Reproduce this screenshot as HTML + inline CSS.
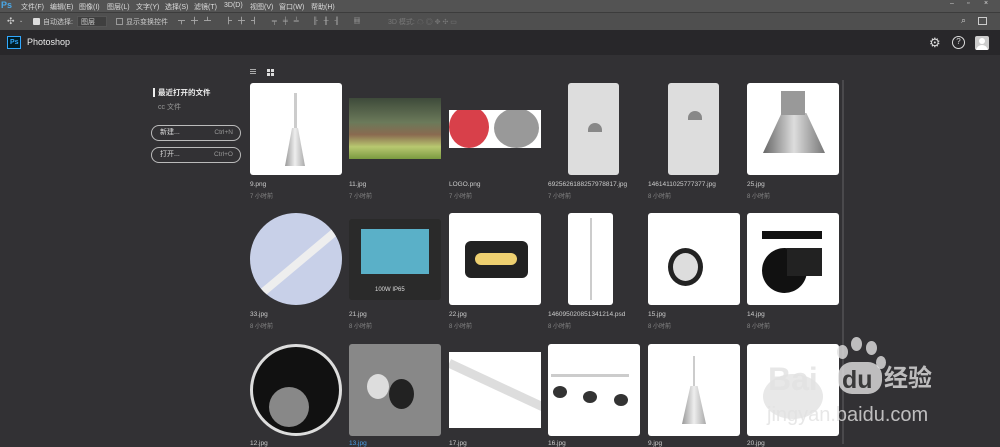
<!DOCTYPE html>
<html><head><meta charset="utf-8"><style>
*{margin:0;padding:0;box-sizing:border-box}
body{width:1000px;height:444px;overflow:hidden;background:#323134;font-family:"Liberation Sans","Noto Sans CJK SC",sans-serif;position:relative;color:#ddd}
.abs{position:absolute}
.menu{left:0;top:0;width:1000px;height:12px;background:#535353;font-size:7px;color:#ddd}
.menu span{position:absolute;top:2px}
.tb{left:0;top:12px;width:1000px;height:18px;background:#4f4f4f;border-top:1px solid #3c3c3c;font-size:7px;color:#ccc}
.hdr{left:0;top:30px;width:1000px;height:25px;background:#28272a}
.th{position:absolute;width:92px;height:92px;background:#fff;border-radius:3px;overflow:hidden}
.nm{position:absolute;font-size:6.5px;color:#ccc}
.tm{position:absolute;font-size:6px;color:#888}
.btn{position:absolute;left:151px;width:90px;height:16px;border:1.5px solid #bbb;border-radius:8px;font-size:7px;color:#ddd;padding-left:8px;line-height:13px}
.btn i{position:absolute;right:7px;top:0;font-style:normal;color:#999;font-size:6.5px}
.wm{color:rgba(225,225,225,.8)}
</style></head><body>
<div class="abs menu">
<span style="left:1px;top:0;font-size:9px;color:#4aa8e8;font-weight:bold">Ps</span>
<span style="left:21px">文件(F)</span><span style="left:50px">编辑(E)</span><span style="left:79px">图像(I)</span><span style="left:107px">图层(L)</span><span style="left:136px">文字(Y)</span><span style="left:165px">选择(S)</span><span style="left:194px">滤镜(T)</span><span style="left:224px">3D(D)</span><span style="left:250px">视图(V)</span><span style="left:279px">窗口(W)</span><span style="left:311px">帮助(H)</span>
<span style="left:950px;top:0;color:#ccc">–</span><span style="left:967px;top:0">▫</span><span style="left:984px;top:0">×</span>
</div>
<div class="abs tb">
<span class="abs" style="left:7px;top:3px;font-size:9px">✣</span><span class="abs" style="left:19px;top:5px;font-size:5px">⌄</span>
<span class="abs" style="left:33px;top:5px;width:7px;height:7px;background:#ddd;border-radius:1px"></span>
<span class="abs" style="left:43px;top:4px">自动选择:</span>
<span class="abs" style="left:77px;top:3px;width:30px;height:11px;background:#3f3f3f;border:1px solid #555;padding-left:3px">图层</span>
<span class="abs" style="left:116px;top:5px;width:7px;height:7px;border:1px solid #999"></span>
<span class="abs" style="left:126px;top:4px">显示变换控件</span>
<span class="abs" style="left:178px;top:3px;letter-spacing:6px;color:#aaa">┳╋┻ ┣╋┫ ╤╪╧ ╟╫╢ ▦</span>
<span class="abs" style="left:388px;top:4px;color:#777">3D 模式: ☁ ◎ ✥ ✣ ▭</span>
<span class="abs" style="left:961px;top:2px;font-size:9px">⌕</span>
<span class="abs" style="left:978px;top:4px;width:9px;height:8px;border:1px solid #ccc"></span>
</div>
<div class="abs hdr">
<div class="abs" style="left:7px;top:6px;width:14px;height:13px;border:1.5px solid #31a8ff;background:#001d26;color:#31a8ff;font-size:7px;padding:2px 0 0 2px;font-weight:bold">Ps</div>
<div class="abs" style="left:27px;top:7px;font-size:9px;color:#eee">Photoshop</div>
<div class="abs" style="left:929px;top:5px;font-size:13px;color:#ddd">⚙</div>
<div class="abs" style="left:952px;top:6px;width:13px;height:13px;border:1.5px solid #ddd;border-radius:50%;font-size:8px;text-align:center;line-height:10px;color:#ddd">?</div>
<div class="abs" style="left:975px;top:6px;width:14px;height:14px;background:#ccc;border-radius:2px;overflow:hidden"><div class="abs" style="left:4px;top:2px;width:6px;height:6px;border-radius:50%;background:#fff"></div><div class="abs" style="left:1px;top:9px;width:12px;height:6px;border-radius:6px 6px 0 0;background:#fff"></div></div>
</div>
<div class="abs" style="left:153px;top:88px;width:1.5px;height:9px;background:#eee"></div>
<div class="abs" style="left:158px;top:87px;font-size:7.5px;color:#eee;font-weight:bold">最近打开的文件</div>
<div class="abs" style="left:158px;top:102px;font-size:7px;color:#999">cc 文件</div>
<div class="btn" style="top:125px">新建...<i>Ctrl+N</i></div>
<div class="btn" style="top:147px">打开...<i>Ctrl+O</i></div>
<div class="abs" style="left:250px;top:69px;width:6px;height:6px;background:repeating-linear-gradient(#aaa 0 1px,transparent 1px 2px)"></div>
<div class="abs" style="left:267px;top:69px;width:7px;height:7px;background:linear-gradient(90deg,transparent 3px,#323134 3px 4px,transparent 4px),linear-gradient(transparent 3px,#323134 3px 4px,transparent 4px),#ddd"></div>
<div class="abs" style="left:842px;top:80px;width:2px;height:364px;background:#4a494c"></div>

<!-- row 1 -->
<div class="th" style="left:250px;top:83px"><div class="abs" style="left:44px;top:10px;width:3px;height:35px;background:#ccc"></div><div class="abs" style="left:35px;top:45px;width:20px;height:38px;background:linear-gradient(90deg,#999,#eee,#aaa);clip-path:polygon(35% 0,65% 0,100% 100%,0 100%)"></div></div>
<div class="th" style="left:349px;top:98px;height:61px;border-radius:0;background:linear-gradient(#3e4a3a,#6b7a5a 40%,#8a6a50 60%,#b8c870 80%,#7a9a40)"></div>
<div class="th" style="left:449px;top:110px;height:38px;border-radius:0"><div class="abs" style="left:0;top:-4px;width:40px;height:42px;background:#d8404a;border-radius:50%"></div><div class="abs" style="left:45px;top:-2px;width:45px;height:40px;background:#999;border-radius:50%"></div></div>
<div class="th" style="left:568px;top:83px;width:51px;background:#ddd"><div class="abs" style="left:20px;top:40px;width:14px;height:9px;background:#888;border-radius:8px 8px 0 0"></div></div>
<div class="th" style="left:668px;top:83px;width:51px;background:#ddd"><div class="abs" style="left:20px;top:28px;width:14px;height:9px;background:#888;border-radius:8px 8px 0 0"></div></div>
<div class="th" style="left:747px;top:83px"><div class="abs" style="left:16px;top:30px;width:62px;height:40px;background:linear-gradient(90deg,#666,#ddd,#777);clip-path:polygon(30% 0,70% 0,100% 100%,0 100%)"></div><div class="abs" style="left:34px;top:8px;width:24px;height:24px;background:#999"></div></div>
<div class="nm" style="left:250px;top:181px">9.png</div><div class="tm" style="left:250px;top:191px">7 小时前</div>
<div class="nm" style="left:349px;top:181px">11.jpg</div><div class="tm" style="left:349px;top:191px">7 小时前</div>
<div class="nm" style="left:449px;top:181px">LOGO.png</div><div class="tm" style="left:449px;top:191px">7 小时前</div>
<div class="nm" style="left:548px;top:181px">6925626188257978817.jpg</div><div class="tm" style="left:548px;top:191px">7 小时前</div>
<div class="nm" style="left:648px;top:181px">1461411025777377.jpg</div><div class="tm" style="left:648px;top:191px">8 小时前</div>
<div class="nm" style="left:747px;top:181px">25.jpg</div><div class="tm" style="left:747px;top:191px">8 小时前</div>
<!-- row 2 -->
<div class="th" style="left:250px;top:213px;background:#c8d0e8;border-radius:50%"><div class="abs" style="left:0;top:40px;width:110px;height:8px;background:#eee;transform:rotate(-40deg)"></div></div>
<div class="th" style="left:349px;top:219px;height:81px;background:#2a2a2a"><div class="abs" style="left:12px;top:10px;width:68px;height:45px;background:#5ab0c8"></div><div class="abs" style="left:26px;top:68px;font-size:6px;color:#ddd">100W IP65</div></div>
<div class="th" style="left:449px;top:213px"><div class="abs" style="left:16px;top:28px;width:63px;height:37px;background:#222;border-radius:6px"></div><div class="abs" style="left:26px;top:40px;width:42px;height:12px;background:#eed070;border-radius:6px"></div></div>
<div class="th" style="left:568px;top:213px;width:45px"><div class="abs" style="left:22px;top:5px;width:2px;height:82px;background:#ccc"></div></div>
<div class="th" style="left:648px;top:213px"><div class="abs" style="left:20px;top:35px;width:35px;height:38px;background:#ddd;border-radius:50%;border:5px solid #222"></div></div>
<div class="th" style="left:747px;top:213px"><div class="abs" style="left:15px;top:35px;width:45px;height:45px;background:#111;border-radius:50%"></div><div class="abs" style="left:40px;top:35px;width:35px;height:28px;background:#222"></div><div class="abs" style="left:15px;top:18px;width:60px;height:8px;background:#111"></div></div>
<div class="nm" style="left:250px;top:311px">33.jpg</div><div class="tm" style="left:250px;top:321px">8 小时前</div>
<div class="nm" style="left:349px;top:311px">21.jpg</div><div class="tm" style="left:349px;top:321px">8 小时前</div>
<div class="nm" style="left:449px;top:311px">22.jpg</div><div class="tm" style="left:449px;top:321px">8 小时前</div>
<div class="nm" style="left:548px;top:311px">146095020851341214.psd</div><div class="tm" style="left:548px;top:321px">8 小时前</div>
<div class="nm" style="left:648px;top:311px">15.jpg</div><div class="tm" style="left:648px;top:321px">8 小时前</div>
<div class="nm" style="left:747px;top:311px">14.jpg</div><div class="tm" style="left:747px;top:321px">8 小时前</div>
<!-- row 3 -->
<div class="th" style="left:250px;top:344px;background:#111;border-radius:50%;border:3px solid #ddd"><div class="abs" style="left:16px;top:40px;width:40px;height:40px;background:#888;border-radius:50%"></div></div>
<div class="th" style="left:349px;top:344px;background:#888"><div class="abs" style="left:40px;top:35px;width:25px;height:30px;background:#222;border-radius:50%"></div><div class="abs" style="left:18px;top:30px;width:22px;height:25px;background:#ddd;border-radius:50%"></div></div>
<div class="th" style="left:449px;top:352px;height:76px;border-radius:0"><div class="abs" style="left:-5px;top:30px;width:110px;height:9px;background:#ddd;transform:rotate(25deg)"></div></div>
<div class="th" style="left:548px;top:344px"><div class="abs" style="left:3px;top:30px;width:78px;height:3px;background:#ccc"></div><div class="abs" style="left:5px;top:42px;width:14px;height:12px;background:#333;border-radius:50%"></div><div class="abs" style="left:35px;top:47px;width:14px;height:12px;background:#333;border-radius:50%"></div><div class="abs" style="left:66px;top:50px;width:14px;height:12px;background:#333;border-radius:50%"></div></div>
<div class="th" style="left:648px;top:344px"><div class="abs" style="left:45px;top:12px;width:2px;height:30px;background:#ccc"></div><div class="abs" style="left:34px;top:42px;width:24px;height:38px;background:linear-gradient(90deg,#999,#eee,#aaa);clip-path:polygon(35% 0,65% 0,100% 100%,0 100%)"></div></div>
<div class="th" style="left:747px;top:344px"><div class="abs" style="left:16px;top:30px;width:60px;height:45px;background:#e8e8e8;border-radius:50%"></div></div>
<div class="nm" style="left:250px;top:440px">12.jpg</div><div class="nm" style="left:349px;top:440px;color:#4a9ee8">13.jpg</div><div class="nm" style="left:449px;top:440px">17.jpg</div><div class="nm" style="left:548px;top:440px">16.jpg</div><div class="nm" style="left:648px;top:440px">9.jpg</div><div class="nm" style="left:747px;top:440px">20.jpg</div>
<!-- watermark -->
<div class="abs wm" style="left:837px;top:345px;width:11px;height:14px;border-radius:50%;background:rgba(225,225,225,.8)"></div>
<div class="abs wm" style="left:851px;top:337px;width:11px;height:14px;border-radius:50%;background:rgba(225,225,225,.8)"></div>
<div class="abs wm" style="left:866px;top:341px;width:11px;height:14px;border-radius:50%;background:rgba(225,225,225,.8)"></div>
<div class="abs wm" style="left:876px;top:356px;width:10px;height:13px;border-radius:50%;background:rgba(225,225,225,.8)"></div>
<div class="abs" style="left:838px;top:362px;width:44px;height:32px;border-radius:14px;background:rgba(225,225,225,.8)"></div>
<div class="abs wm" style="left:768px;top:362px;font-size:32px;font-weight:bold;line-height:34px">Bai</div>
<div class="abs" style="left:842px;top:366px;font-size:25px;font-weight:bold;color:#3a3a3a;line-height:28px">du</div>
<div class="abs wm" style="left:884px;top:364px;font-size:24px;line-height:30px;font-weight:bold">经验</div>
<div class="abs wm" style="left:767px;top:403px;font-size:20px;line-height:24px">jingyan.baidu.com</div>
</body></html>
